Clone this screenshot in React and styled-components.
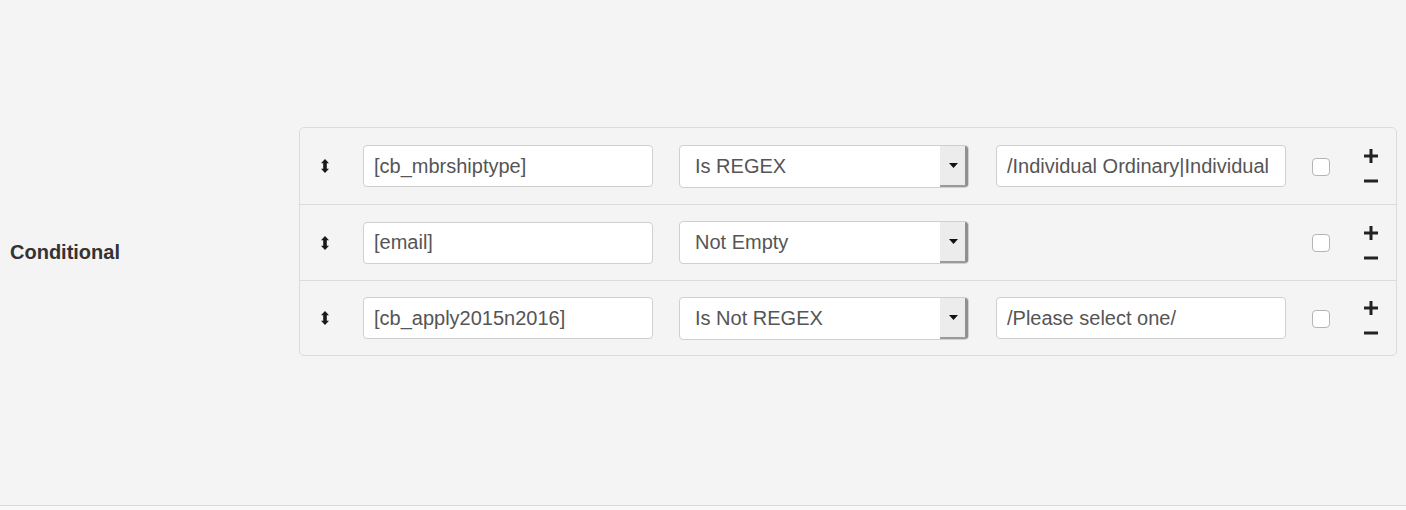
import React from "react";
import styled, { createGlobalStyle } from "styled-components";

const Global = createGlobalStyle`
  html, body { margin: 0; padding: 0; background: #f8f8f8; }
  body { font-family: "Liberation Sans", Arial, Helvetica, sans-serif; }
  * { box-sizing: border-box; }
`;

const Section = styled.div`
  background: #f4f4f4;
  border-bottom: 1px solid #dadada;
  height: 506px;
  padding-top: 127px;
  display: flex;
  align-items: flex-start;
`;

const LabelCol = styled.div`
  width: 299px;
  flex: none;
  align-self: stretch;
  display: flex;
  align-items: flex-start;
  padding: 113px 0 0 10px;
`;

const Label = styled.label`
  font-size: 20px;
  font-weight: 700;
  color: #333;
  line-height: 24px;
`;

const Panel = styled.div`
  width: 1098px;
  border: 1px solid #dcdcdc;
  border-radius: 5px;
  background: #f4f4f4;
`;

const Row = styled.div`
  display: grid;
  grid-template-columns: 63px 316px 317px 316px 45px 1fr;
  align-items: center;
  justify-items: start;
  height: ${(p) => (p.$last ? 75 : 76)}px;
  border-top: ${(p) => (p.$first ? "none" : "1px solid #dcdcdc")};
`;

const Handle = styled.div`
  margin-left: 21px;
  width: 8px;
  height: 14px;
  display: flex;
`;

const TextInput = styled.input`
  width: 290px;
  height: 42px;
  border: 1px solid #cfcfcf;
  border-radius: 4px;
  background: #fff;
  padding: 0 10px;
  font-family: "Liberation Sans", Arial, Helvetica, sans-serif;
  font-size: 20px;
  color: #555;
  outline: none;
`;

const SelectBox = styled.div`
  width: 290px;
  height: 43px;
  border: 1px solid #cfcfcf;
  border-radius: 4px;
  background: #fff;
  display: flex;
  align-items: stretch;
  overflow: hidden;
`;

const SelectText = styled.span`
  flex: 1;
  display: flex;
  align-items: center;
  padding-left: 15px;
  font-size: 20px;
  color: #555;
`;

const SelectButton = styled.span`
  width: 28px;
  background: #ececec;
  border-right: 3px solid #8f8f8f;
  border-bottom: 2px solid #9a9a9a;
  display: flex;
  align-items: center;
  justify-content: center;
  padding-left: 1px;
`;

const Empty = styled.div``;

const Check = styled.input`
  appearance: none;
  width: 18px;
  height: 18px;
  margin: 1px 0 0 0;
  border: 1px solid #b5b5b5;
  border-radius: 4px;
  background: #fff;
`;

const Actions = styled.div`
  margin-left: 7px;
  display: flex;
  flex-direction: column;
  align-items: center;
  gap: 16px;
`;

const DragIcon = () => (
  <svg width="8" height="14" viewBox="0 0 8 14">
    <path d="M4 0 L8 4.2 L5.8 4.2 L5.8 9.8 L8 9.8 L4 14 L0 9.8 L2.2 9.8 L2.2 4.2 L0 4.2 Z" fill="#1a1a1a" />
  </svg>
);

const Caret = () => (
  <svg width="9" height="5" viewBox="0 0 9 5">
    <path d="M0 0 H9 L4.5 5 Z" fill="#111" />
  </svg>
);

const Plus = () => (
  <svg width="14" height="14" viewBox="0 0 14 14">
    <rect x="5.5" y="0" width="3" height="14" fill="#222" />
    <rect x="0" y="5.5" width="14" height="3" fill="#222" />
  </svg>
);

const Minus = () => (
  <svg width="14" height="4" viewBox="0 0 14 4">
    <rect x="0" y="0.5" width="14" height="3" fill="#222" />
  </svg>
);

const rows = [
  { field: "[cb_mbrshiptype]", op: "Is REGEX", value: "/Individual Ordinary|Individual" },
  { field: "[email]", op: "Not Empty", value: null },
  { field: "[cb_apply2015n2016]", op: "Is Not REGEX", value: "/Please select one/" },
];

export default function App() {
  return (
    <>
      <Global />
      <Section>
        <LabelCol>
          <Label>Conditional</Label>
        </LabelCol>
        <Panel>
          {rows.map((r, i) => (
            <Row key={i} $first={i === 0} $last={i === rows.length - 1}>
              <Handle>
                <DragIcon />
              </Handle>
              <TextInput defaultValue={r.field} />
              <SelectBox>
                <SelectText>{r.op}</SelectText>
                <SelectButton>
                  <Caret />
                </SelectButton>
              </SelectBox>
              {r.value !== null ? <TextInput defaultValue={r.value} /> : <Empty />}
              <Check type="checkbox" />
              <Actions>
                <Plus />
                <Minus />
              </Actions>
            </Row>
          ))}
        </Panel>
      </Section>
    </>
  );
}
